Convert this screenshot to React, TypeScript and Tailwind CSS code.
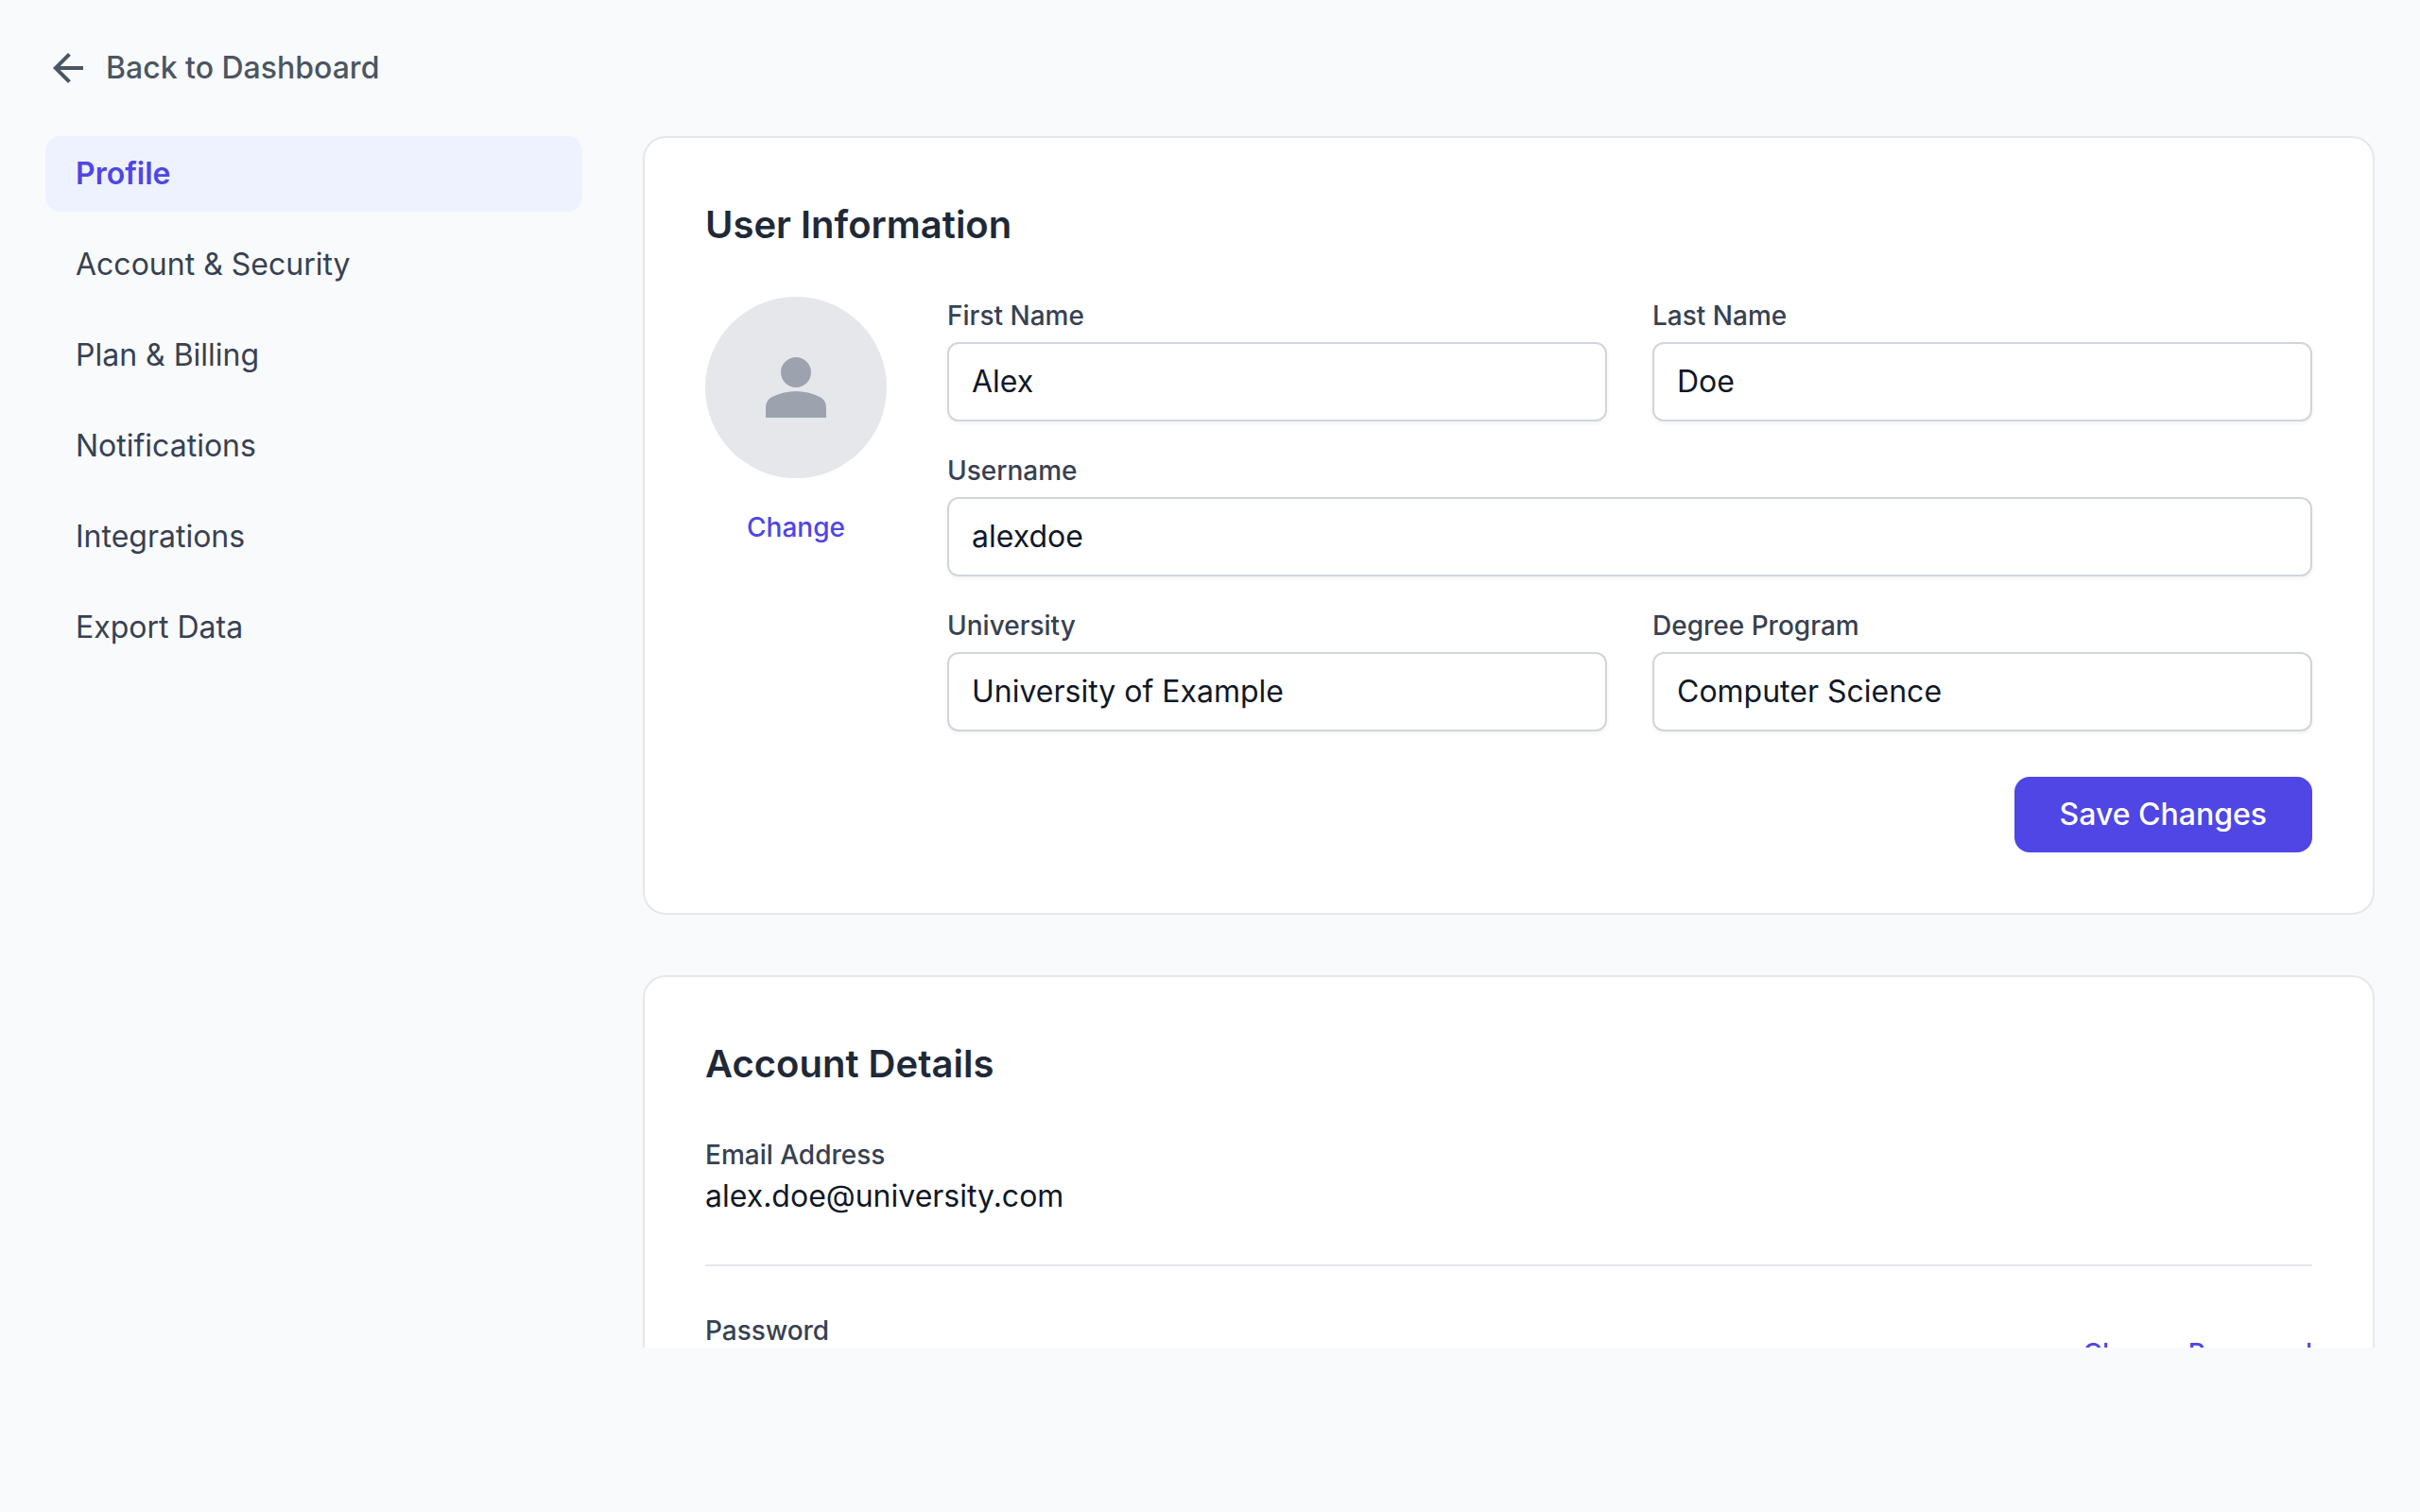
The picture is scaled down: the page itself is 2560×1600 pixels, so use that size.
import type { ReactNode } from "react";

const navItems = [
  { label: "Profile", active: true },
  { label: "Account & Security", active: false },
  { label: "Plan & Billing", active: false },
  { label: "Notifications", active: false },
  { label: "Integrations", active: false },
  { label: "Export Data", active: false },
];

function ArrowBackIcon() {
  return (
    <svg className="size-12 shrink-0" viewBox="0 -960 960 960" fill="currentColor" aria-hidden="true">
      <path d="m313-440 224 224-57 56-320-320 320-320 57 56-224 224h487v80H313Z" />
    </svg>
  );
}

function PersonIcon() {
  return (
    <svg className="size-24 text-[#9ca3af]" viewBox="0 -960 960 960" fill="currentColor" aria-hidden="true">
      <path d="M480-480q-66 0-113-47t-47-113q0-66 47-113t113-47q66 0 113 47t47 113q0 66-47 113t-113 47ZM160-160v-112q0-34 17.5-62.5T224-378q62-31 126-46.5T480-440q66 0 130 15.5T736-378q29 15 46.5 43.5T800-272v112H160Z" />
    </svg>
  );
}

function Card({ title, children }: { title: string; children: ReactNode }) {
  return (
    <section className="rounded-3xl border-2 border-[#e5e7eb] bg-white p-16">
      <h2 className="mb-12 text-[40px] leading-14 font-semibold text-[#1f2937]">{title}</h2>
      {children}
    </section>
  );
}

function Field({ label, value, wide = false }: { label: string; value: string; wide?: boolean }) {
  return (
    <label className={wide ? "col-span-2 block" : "block"}>
      <span className="block text-[28px] leading-10 font-medium text-[#374151]">{label}</span>
      <input
        type="text"
        defaultValue={value}
        className="mt-2 block h-21 w-full rounded-xl border-2 border-[#d1d5db] bg-white px-6 pb-0.5 text-[32px] leading-12 text-[#111827] shadow-[0_2px_4px_0_rgb(0_0_0/0.05)]"
      />
    </label>
  );
}

export default function App() {
  return (
    <div className="min-h-screen bg-[#f9fafb] font-['Inter',sans-serif] text-[32px] leading-12 [font-optical-sizing:none]">
      <div className="h-[1426px] overflow-hidden p-12">
        <header className="mb-12 flex">
          <a href="#" className="flex items-center gap-4 font-medium text-[#4b5563]">
            <ArrowBackIcon />
            <span>Back to Dashboard</span>
          </a>
        </header>

        <div className="grid grid-cols-4 gap-16">
          <nav className="flex flex-col gap-4">
            {navItems.map((item) => (
              <a
                key={item.label}
                href="#"
                className={
                  item.active
                    ? "rounded-2xl bg-[#eef2ff] px-8 py-4 font-semibold text-[#4f46e5]"
                    : "rounded-2xl px-8 py-4 text-[#374151]"
                }
              >
                {item.label}
              </a>
            ))}
          </nav>

          <main className="col-span-3 flex flex-col gap-16">
            <Card title="User Information">
              <div className="flex items-start gap-16">
                <div className="flex shrink-0 flex-col items-center gap-8">
                  <div className="flex size-48 items-center justify-center rounded-full bg-[#e5e7eb]">
                    <PersonIcon />
                  </div>
                  <button className="text-[28px] leading-10 font-medium text-[#4f46e5]">Change</button>
                </div>
                <form className="grow">
                  <div className="grid grid-cols-2 gap-x-12 gap-y-8">
                    <Field label="First Name" value="Alex" />
                    <Field label="Last Name" value="Doe" />
                    <Field label="Username" value="alexdoe" wide />
                    <Field label="University" value="University of Example" />
                    <Field label="Degree Program" value="Computer Science" />
                  </div>
                  <div className="mt-12 flex justify-end">
                    <button
                      type="button"
                      className="rounded-2xl bg-[#4f46e5] px-12 py-4 font-medium text-white"
                    >
                      Save Changes
                    </button>
                  </div>
                </form>
              </div>
            </Card>

            <Card title="Account Details">
              <div className="border-b-2 border-[#e5e7eb] pb-12">
                <p className="text-[28px] leading-10 font-medium text-[#374151]">Email Address</p>
                <p className="text-[#111827]">alex.doe@university.com</p>
              </div>
              <div className="flex h-34 items-center justify-between pt-12">
                <p className="self-start text-[28px] leading-10 font-medium text-[#374151]">Password</p>
                <button className="text-[28px] leading-10 font-medium text-[#4f46e5]">Change Password</button>
              </div>
            </Card>
          </main>
        </div>
      </div>
    </div>
  );
}
